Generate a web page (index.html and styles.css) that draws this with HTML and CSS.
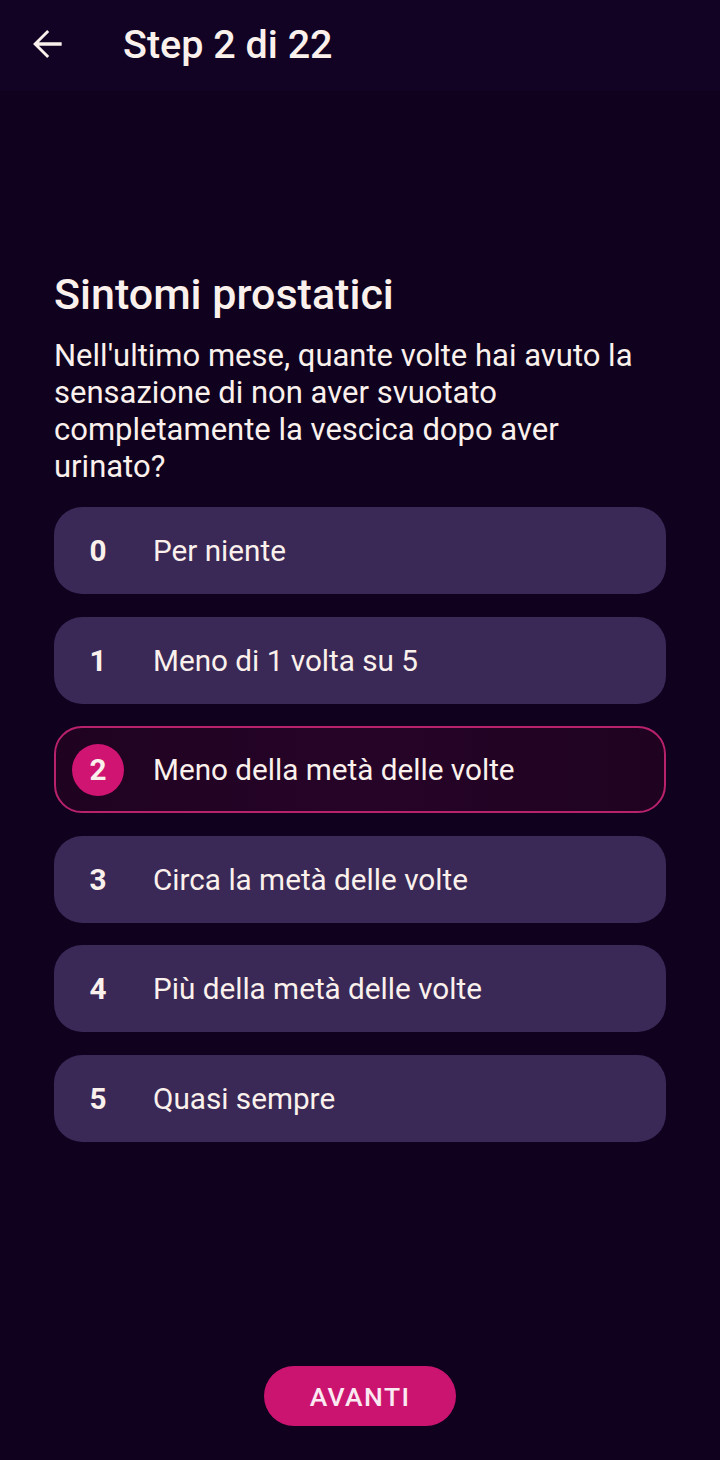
FILE: index.html
```html
<!DOCTYPE html>
<html lang="it">
<head>
<meta charset="utf-8">
<title>Step 2 di 22</title>
<link rel="stylesheet" href="styles.css">
</head>
<body>
<div class="screen">
  <header class="appbar">
    <button class="back" aria-label="Indietro">
      <svg width="44" height="44" viewBox="0 0 24 24"><path d="M20 11.1H7.6l5.6-5.6L12.1 4.4 4.4 12l7.7 7.6 1.1-1.1-5.6-5.6H20z" fill="#fbf1ec"/></svg>
    </button>
    <h1 class="title">Step 2 di 22</h1>
  </header>
  <main class="content">
    <h2 class="heading">Sintomi prostatici</h2>
    <p class="question">Nell'ultimo mese, quante volte hai avuto la sensazione di non aver svuotato completamente la vescica dopo aver urinato?</p>
    <div class="options">
      <div class="option"><span class="num">0</span><span class="label">Per niente</span></div>
      <div class="option"><span class="num">1</span><span class="label">Meno di 1 volta su 5</span></div>
      <div class="option selected"><span class="num">2</span><span class="label">Meno della metà delle volte</span></div>
      <div class="option"><span class="num">3</span><span class="label">Circa la metà delle volte</span></div>
      <div class="option"><span class="num">4</span><span class="label">Più della metà delle volte</span></div>
      <div class="option"><span class="num">5</span><span class="label">Quasi sempre</span></div>
    </div>
  </main>
  <footer class="footer">
    <button class="next">AVANTI</button>
  </footer>
</div>
</body>
</html>
```
FILE: styles.css
```css
* { box-sizing: border-box; }
html, body { margin: 0; padding: 0; }
body {
  background: #10011f;
  color: #fbf1ec;
  font-family: Roboto, "Noto Sans", sans-serif;
}
.screen {
  width: 720px;
  height: 1460px;
  display: flex;
  flex-direction: column;
}
.appbar {
  height: 91px;
  background: #120324;
  display: flex;
  align-items: center;
  padding-left: 25px;
  padding-bottom: 2px;
}
.back {
  background: none;
  border: 0;
  padding: 0;
  width: 44px;
  height: 44px;
  display: flex;
  margin-right: 54px;
  margin-top: -2px;
}
.title {
  margin: 0;
  font-size: 39.5px;
  font-weight: 500;
  line-height: 46px;
}
.content {
  padding: 181px 54px 0 54px;
  flex: 1;
}
.heading {
  margin: 0;
  font-size: 43px;
  font-weight: 500;
  line-height: 44px;
}
.question {
  margin: 21px 0 0 0;
  font-size: 31px;
  line-height: 37px;
  font-weight: 400;
}
.options {
  margin-top: 22px;
  display: flex;
  flex-direction: column;
  gap: 22.5px;
}
.option {
  height: 87px;
  border-radius: 28px;
  background: #3a2856;
  display: flex;
  align-items: center;
  padding-left: 18px;
  font-size: 29.7px;
}
.option .num {
  width: 52px;
  height: 52px;
  border-radius: 50%;
  display: flex;
  align-items: center;
  justify-content: center;
  font-weight: 700;
  margin-right: 29px;
}
.option .label { font-weight: 400; }
.option.selected {
  background: linear-gradient(90deg, #1f0220 0%, #260428 50%, #1f0220 100%);
  border: 2px solid #b8226c;
  padding-left: 16px;
}
.option.selected .num { background: #cf1472; }
.footer {
  display: flex;
  justify-content: center;
  padding-bottom: 34px;
}
.next {
  width: 192px;
  height: 60px;
  border: 0;
  border-radius: 30px;
  background: #cb1470;
  color: #fbe9f2;
  font-family: Roboto, "Noto Sans", sans-serif;
  font-size: 26.5px;
  font-weight: 500;
  letter-spacing: 1.4px;
}
```
